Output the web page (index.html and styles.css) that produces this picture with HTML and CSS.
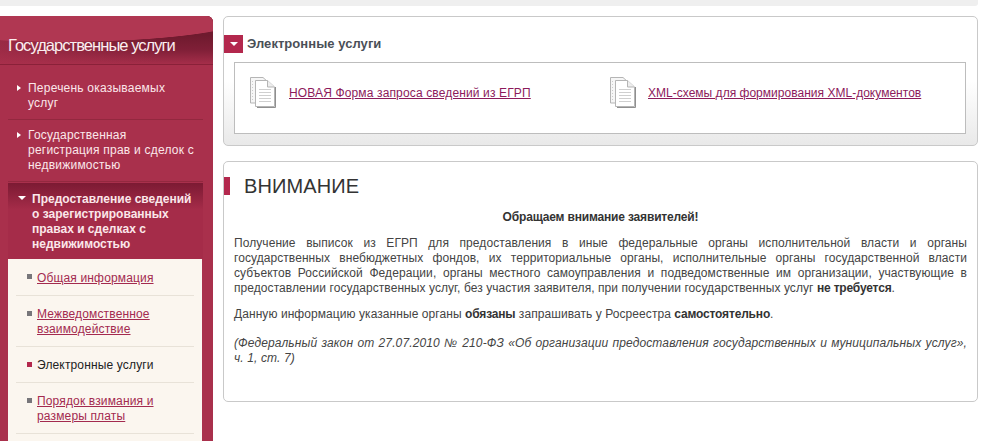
FILE: index.html
```html
<!DOCTYPE html>
<html lang="ru">
<head>
<meta charset="utf-8">
<title>Электронные услуги</title>
<link rel="stylesheet" href="styles.css">
</head>
<body>
<div class="topbar"></div>
<div class="layout">
  <aside class="sidebar">
    <h2 class="side-title">Государственные услуги</h2>
    <ul class="menu">
      <li class="menu-item"><a>Перечень оказываемых услуг</a></li>
      <li class="menu-item"><a>Государственная регистрация прав и сделок с недвижимостью</a></li>
      <li class="menu-open"><a>Предоставление сведений о зарегистрированных правах и сделках с недвижимостью</a></li>
    </ul>
    <ul class="submenu">
      <li class="sub-item"><a href="#">Общая информация</a></li>
      <li class="sub-item"><a href="#">Межведомственное взаимодействие</a></li>
      <li class="sub-item current">Электронные услуги</li>
      <li class="sub-item"><a href="#">Порядок взимания и размеры платы</a></li>
    </ul>
  </aside>
  <main class="content">
    <section class="panel panel-files">
      <h3 class="files-title"><span class="files-marker"></span>Электронные услуги</h3>
      <div class="files">
        <div class="file file-a">
          <svg class="doc" width="28" height="33" viewBox="0 0 28 33"><g fill="#fff" stroke="#b5b5b5"><path d="M1.5 1.5H14L19 6V27H1.5Z" fill="#f6f6f6"/><path d="M6.5 4.5H18.5L25.5 11V30.5H6.5Z"/><path d="M18.5 4.5V11H25.5" fill="#eee"/></g><path d="M26.5 11V31.5H8" fill="none" stroke="#8f8f8f"/><path d="M10 13.5H22M10 16.5H22M10 19.5H22M10 22.5H22M10 25.5H22" stroke="#cfcfcf"/><path d="M3.5 5V24" stroke="#ccc" stroke-dasharray="1 2"/></svg>
          <a href="#">НОВАЯ Форма запроса сведений из ЕГРП</a>
        </div>
        <div class="file file-b">
          <svg class="doc" width="28" height="33" viewBox="0 0 28 33"><g fill="#fff" stroke="#b5b5b5"><path d="M1.5 1.5H14L19 6V27H1.5Z" fill="#f6f6f6"/><path d="M6.5 4.5H18.5L25.5 11V30.5H6.5Z"/><path d="M18.5 4.5V11H25.5" fill="#eee"/></g><path d="M26.5 11V31.5H8" fill="none" stroke="#8f8f8f"/><path d="M10 13.5H22M10 16.5H22M10 19.5H22M10 22.5H22M10 25.5H22" stroke="#cfcfcf"/><path d="M3.5 5V24" stroke="#ccc" stroke-dasharray="1 2"/></svg>
          <a href="#">XML-схемы для формирования XML-документов</a>
        </div>
      </div>
    </section>
    <section class="panel panel-notice">
      <h1 class="notice-title">ВНИМАНИЕ</h1>
      <div class="notice-body">
        <p class="notice-lead"><b>Обращаем внимание заявителей!</b></p>
        <p class="notice-main">Получение выписок из ЕГРП для предоставления в иные федеральные органы исполнительной власти и органы государственных внебюджетных фондов, их территориальные органы, исполнительные органы государственной власти субъектов Российской Федерации, органы местного самоуправления и подведомственные им организации, участвующие в предоставлении государственных услуг, без участия заявителя, при получении государственных услуг <b>не требуется</b>.</p>
        <p class="notice-duty">Данную информацию указанные органы <b>обязаны</b> запрашивать у Росреестра <b>самостоятельно</b>.</p>
        <p class="notice-law"><i>(Федеральный закон от 27.07.2010 № 210-ФЗ «Об организации предоставления государственных и муниципальных услуг», ч. 1, ст. 7)</i></p>
      </div>
    </section>
  </main>
</div>
</body>
</html>
```
FILE: styles.css
```css
html, body { margin: 0; padding: 0; height: 441px; overflow: hidden; background: #fff; }
body { font: 12px/15px "Liberation Sans", Arial, sans-serif; color: #444; }
ul { list-style: none; margin: 0; padding: 0; }
h1, h2, h3, p { margin: 0; font-weight: normal; }

.topbar { height: 6px; width: 978px; background: #efefef; border-radius: 0 0 3px 0; }
.layout { display: flex; gap: 10px; width: 978px; margin-top: 10px; align-items: flex-start; }

.sidebar { width: 213px; flex: none; background: #a9304c; border-radius: 0 6px 0 0; padding-bottom: 30px; }
.side-title {
  height: 49px; box-sizing: border-box; padding: 20px 0 0 8px;
  font: 16.5px/19px "Liberation Sans", Arial, sans-serif; letter-spacing: -0.95px; color: #fbeef0;
  border-bottom: 1px solid #8a2139; border-radius: 0 6px 0 0;
  background:
    radial-gradient(ellipse 190px 26px at 62px 0, #b03752 98%, transparent 100%),
    linear-gradient(90deg, rgba(169,48,76,.7), rgba(169,48,76,0) 75%),
    linear-gradient(180deg, #6f1a2e 40%, #7f1f37 70%, #a52e4a 100%);
}
.menu { padding: 0 10px 0 8px; }
.menu-item { position: relative; padding: 16px 7px 8px 20px; color: #fbe7ea; border-bottom: 1px solid #93283f; letter-spacing: .22px; }
.menu-item + .menu-item { padding-top: 8px; padding-bottom: 8px; }
.menu-item::before, .menu-open::before { content: ""; position: absolute; }
.menu-item::before {
  left: 9px; top: 20px; border-left: 4px solid #fff; border-top: 3.5px solid transparent; border-bottom: 3.5px solid transparent;
}
.menu-item + .menu-item::before { top: 12px; }
.menu-open {
  position: relative; margin-top: 1px; padding: 9px 8px 8px 24px; color: #fbe7ea; font-weight: bold; height: 59px;
  background: linear-gradient(180deg, #7c1a33, #a52c49 35%, #a52c49);
}
.menu-open::before {
  left: 10px; top: 13px; border-top: 4px solid #fff; border-left: 4px solid transparent; border-right: 4px solid transparent;
}
.submenu { margin: 0 11px 0 8px; padding: 0 8px 30px; background: #fbf6ef; letter-spacing: .15px; }
.sub-item { position: relative; padding: 11px 10px 9px 21px; border-bottom: 1px solid #e8e2d8; color: #222; }
.sub-item:first-child { padding-top: 12px; }
.sub-item::before { content: ""; position: absolute; left: 11px; top: 15px; width: 5px; height: 5px; background: #77767a; }
.sub-item.current::before { background: #b3284d; }
.sub-item a { color: #a32a4f; }

.content { width: 755px; flex: none; display: flex; flex-direction: column; gap: 15px; }
.panel { border: 1px solid #c9c9c9; border-radius: 5px; box-sizing: border-box; }
.panel-files { height: 130px; padding-top: 18px; background: linear-gradient(180deg, #fff 50%, #e9e9e9 100%); }
.files-title { display: flex; align-items: center; gap: 4px; height: 18px; font: bold 13px/22px "Liberation Sans", Arial, sans-serif; color: #4a4f57; letter-spacing: .05px; }
.files-marker { position: relative; width: 19px; height: 18px; background: #b3284d; }
.files-marker::after { content: ""; position: absolute; left: 6px; top: 7px; border-top: 4px solid #fff; border-left: 4px solid transparent; border-right: 4px solid transparent; }
.files { display: flex; height: 72px; box-sizing: border-box; margin: 9px 11px 0 10px; padding: 14px 14px 0; background: #fff; border: 1px solid #bdbdbd; }
.file { display: flex; align-items: center; gap: 12px; height: 33px; letter-spacing: .14px; }
.file .doc { margin-top: -2px; }
.file a { color: #8c1a5b; }
.file-a { width: 360px; }
.file-b { gap: 11px; letter-spacing: .02px; }

.panel-notice { height: 241px; padding-top: 15px; background: #fff; }
.notice-title { height: 18px; padding-left: 14px; border-left: 6px solid #b3284d; font: 20px/18px "Liberation Sans", Arial, sans-serif; color: #333; letter-spacing: .1px; }
.notice-body { padding: 0 10px; margin-top: 15px; letter-spacing: .07px; }
.notice-body p { text-align: justify; }
.notice-body p.notice-lead { text-align: center; margin-bottom: 11px; }
.notice-body b { letter-spacing: -.17px; color: #333; }
.notice-main { margin-bottom: 11px; }
.notice-duty { margin-bottom: 14px; }
.notice-law { letter-spacing: .12px; }
```
